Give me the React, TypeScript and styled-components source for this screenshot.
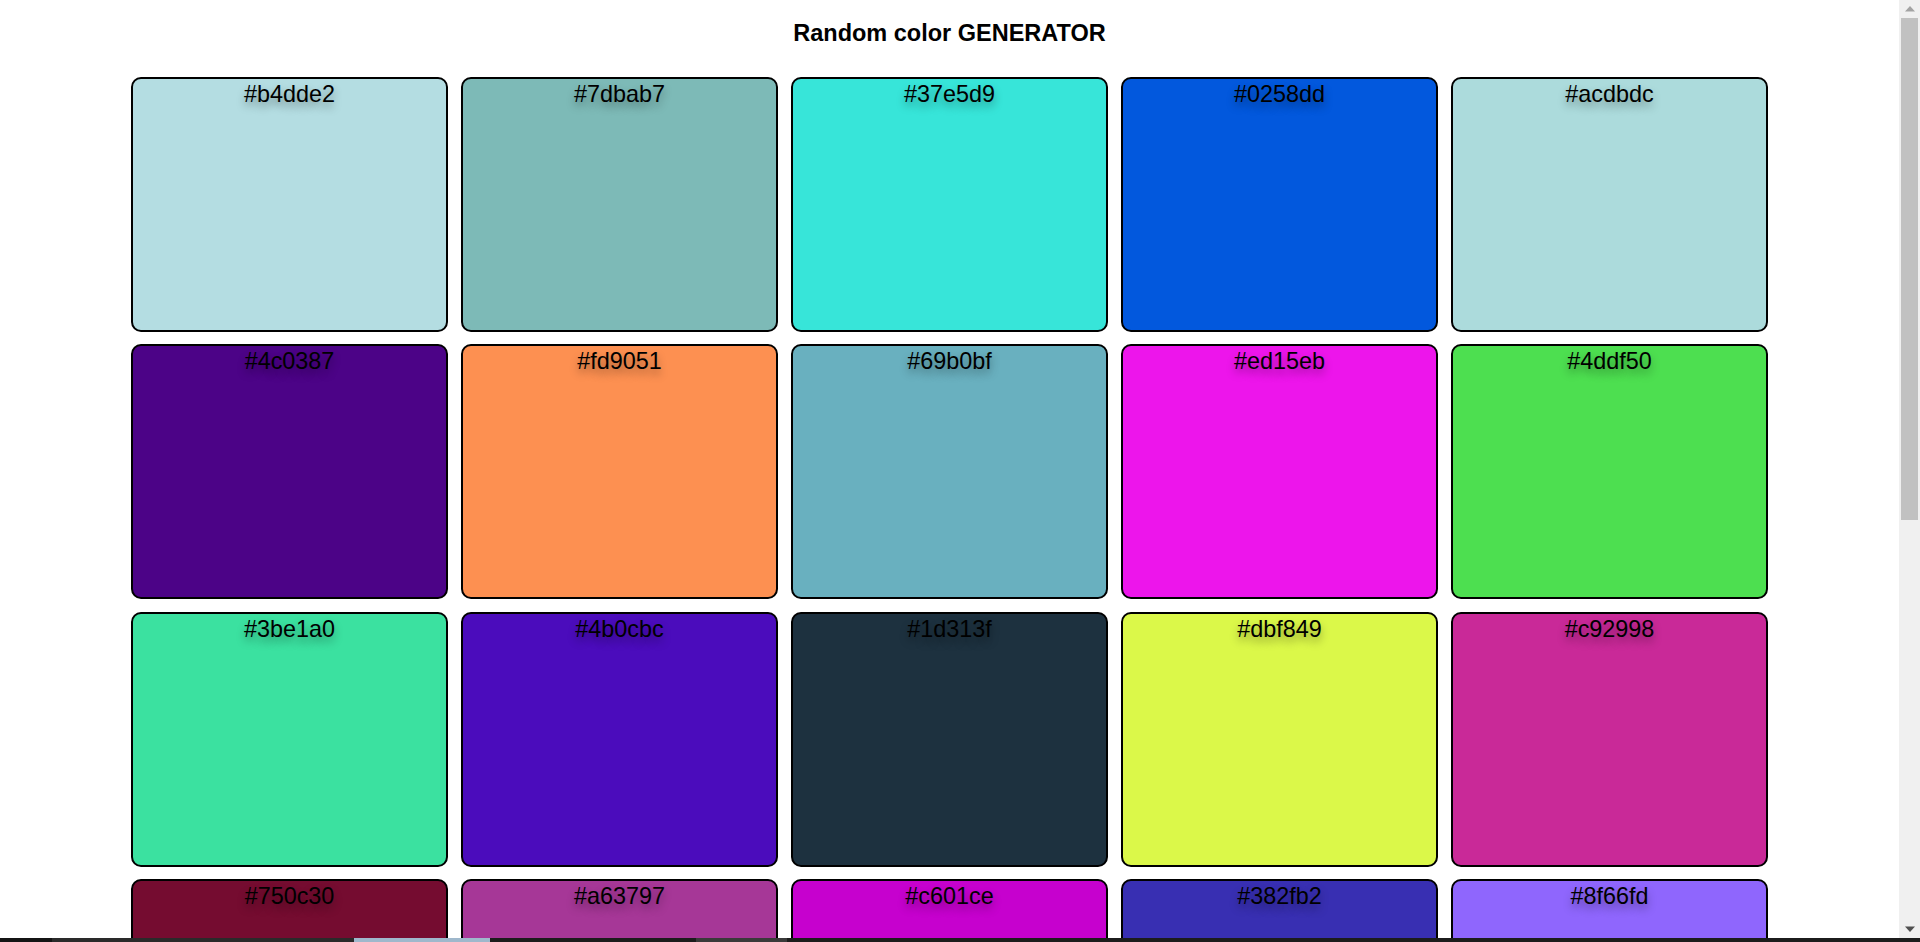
import React from "react";
import styled, { createGlobalStyle } from "styled-components";

const Global = createGlobalStyle`
  html, body { margin: 0; padding: 0; height: 100%; overflow: hidden; background: #fff; }
  body { font-family: "Liberation Sans", Arial, sans-serif; }
  #root { height: 100%; }
`;

const Screen = styled.div`
  display: flex;
  flex-direction: column;
  height: 942px;
  width: 1920px;
`;

const Viewport = styled.div`
  display: flex;
  flex: 1;
  min-height: 0;
`;

const Main = styled.main`
  flex: 1;
  overflow: hidden;
  padding: 20px 0 0 131px;
  background: #ffffff;
`;

const Title = styled.h1`
  margin: 0 0 30px -131px;
  text-align: center;
  font-size: 23.5px;
  line-height: 27px;
  font-weight: 700;
  color: #000;
`;

const Grid = styled.div`
  display: grid;
  grid-template-columns: repeat(5, 317px);
  grid-auto-rows: 255px;
  column-gap: 13px;
  row-gap: 12.4px;
  justify-content: start;
`;

const Card = styled.div<{ $bg: string }>`
  box-sizing: border-box;
  background: ${(p) => p.$bg};
  border: 2px solid #000;
  border-radius: 10px;
  display: flex;
  justify-content: center;
  align-items: flex-start;
  padding-top: 2px;
`;

const Hex = styled.span`
  font-size: 23.4px;
  line-height: 27px;
  color: #000;
  text-shadow: 0 5px 9px rgba(0, 0, 0, 0.38);
`;

const Scrollbar = styled.div`
  width: 21px;
  background: #f0f0f0;
  display: flex;
  flex-direction: column;
  align-items: center;
`;

const ArrowBox = styled.div`
  height: 18px;
  width: 100%;
  display: flex;
  align-items: center;
  justify-content: center;
`;

const Track = styled.div`
  flex: 1;
  width: 100%;
  display: flex;
  flex-direction: column;
  align-items: center;
`;

const Thumb = styled.div`
  width: 17px;
  height: 502px;
  background: #c1c1c1;
`;

const Taskbar = styled.div`
  height: 4px;
  display: flex;
  background: #1c1c1c;
`;

const TaskSeg = styled.div<{ $w: number; $c: string }>`
  width: ${(p) => p.$w}px;
  background: ${(p) => p.$c};
`;

const rows = [
  ["#b4dde2", "#7dbab7", "#37e5d9", "#0258dd", "#acdbdc"],
  ["#4c0387", "#fd9051", "#69b0bf", "#ed15eb", "#4ddf50"],
  ["#3be1a0", "#4b0cbc", "#1d313f", "#dbf849", "#c92998"],
  ["#750c30", "#a63797", "#c601ce", "#382fb2", "#8f66fd"],
];

export default function App() {
  return (
    <Screen>
      <Global />
      <Viewport>
        <Main>
          <Title>Random color GENERATOR</Title>
          <Grid>
            {rows.flat().map((c) => (
              <Card key={c} $bg={c}>
                <Hex>{c}</Hex>
              </Card>
            ))}
          </Grid>
        </Main>
        <Scrollbar>
          <ArrowBox>
            <svg width="10" height="6" viewBox="0 0 10 6">
              <polygon points="5,0 10,5.5 0,5.5" fill="#a3a3a3" />
            </svg>
          </ArrowBox>
          <Track>
            <Thumb />
          </Track>
          <ArrowBox>
            <svg width="10" height="6" viewBox="0 0 10 6">
              <polygon points="0,0.5 10,0.5 5,6" fill="#505050" />
            </svg>
          </ArrowBox>
        </Scrollbar>
      </Viewport>
      <Taskbar>
        <TaskSeg $w={52} $c="#141414" />
        <TaskSeg $w={302} $c="#2a2a2a" />
        <TaskSeg $w={136} $c="#9fb8cc" />
        <TaskSeg $w={206} $c="#1c1c1c" />
        <TaskSeg $w={91} $c="#3a3a3a" />
      </Taskbar>
    </Screen>
  );
}
